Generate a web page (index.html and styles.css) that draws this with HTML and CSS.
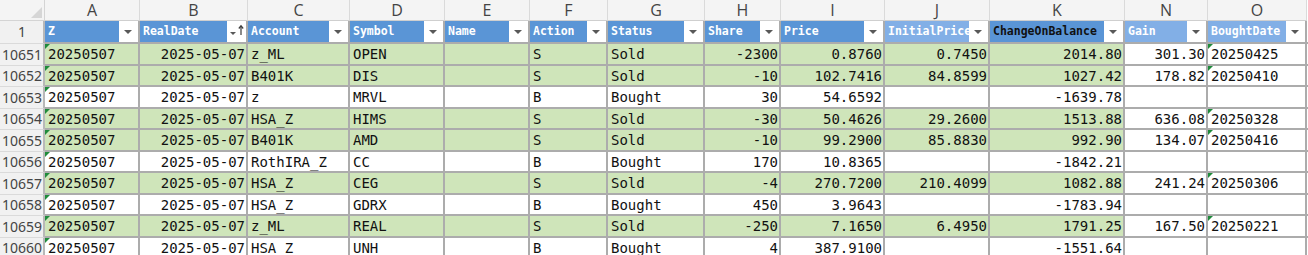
FILE: index.html
```html
<!DOCTYPE html>
<html>
<head>
<meta charset="utf-8">
<link rel="stylesheet" href="styles.css">
</head>
<body>
<div class="sheet">
  <div class="row letters">
    <div class="corner"><svg width="44" height="20"><path d="M42 7V18H31Z" fill="#d6d6d6"/></svg></div>
    <div class="L">A</div><div class="L">B</div><div class="L">C</div><div class="L">D</div><div class="L">E</div><div class="L">F</div><div class="L">G</div><div class="L">H</div><div class="L">I</div><div class="L">J</div><div class="L">K</div><div class="L">N</div><div class="L">O</div><div class="L fill"></div>
  </div>
  <div class="row head">
    <div class="n">1</div>
    <div class="c h">Z<span class="fb"><svg width="19" height="20"><path d="M5 8h8l-4 4z" fill="#595959"/></svg></span></div>
    <div class="c h">RealDate<span class="fb"><svg width="19" height="20"><path d="M3 10h6l-3 3z" fill="#595959"/><path d="M14 4v9" stroke="#3c3c3c" stroke-width="1.2" fill="none"/><path d="M11.8 6.5L14 3.8l2.2 2.7" stroke="#3c3c3c" stroke-width="1.2" fill="none"/></svg></span></div>
    <div class="c h">Account<span class="fb"><svg width="19" height="20"><path d="M5 8h8l-4 4z" fill="#595959"/></svg></span></div>
    <div class="c h">Symbol<span class="fb"><svg width="19" height="20"><path d="M5 8h8l-4 4z" fill="#595959"/></svg></span></div>
    <div class="c h">Name<span class="fb"><svg width="19" height="20"><path d="M5 8h8l-4 4z" fill="#595959"/></svg></span></div>
    <div class="c h">Action<span class="fb"><svg width="19" height="20"><path d="M5 8h8l-4 4z" fill="#595959"/></svg></span></div>
    <div class="c h">Status<span class="fb"><svg width="19" height="20"><path d="M5 8h8l-4 4z" fill="#595959"/></svg></span></div>
    <div class="c h">Share<span class="fb"><svg width="19" height="20"><path d="M5 8h8l-4 4z" fill="#595959"/></svg></span></div>
    <div class="c h">Price<span class="fb"><svg width="19" height="20"><path d="M5 8h8l-4 4z" fill="#595959"/></svg></span></div>
    <div class="c h hl">InitialPrice<span class="fb"><svg width="19" height="20"><path d="M5 8h8l-4 4z" fill="#595959"/></svg></span></div>
    <div class="c h hk">ChangeOnBalance<span class="fb"><svg width="19" height="20"><path d="M5 8h8l-4 4z" fill="#595959"/></svg></span></div>
    <div class="c h hl">Gain<span class="fb"><svg width="19" height="20"><path d="M5 8h8l-4 4z" fill="#595959"/></svg></span></div>
    <div class="c h hl">BoughtDate<span class="fb"><svg width="19" height="20"><path d="M5 8h8l-4 4z" fill="#595959"/></svg></span></div>
    <div class="c fill"></div>
  </div>

  <div class="row d">
    <div class="n">10651</div>
    <div class="c g t">20250507</div><div class="c g r">2025-05-07</div><div class="c g">z_ML</div><div class="c g">OPEN</div><div class="c g"></div><div class="c g">S</div><div class="c g">Sold</div><div class="c g r">-2300</div><div class="c g r">0.8760</div><div class="c g r">0.7450</div><div class="c g r">2014.80</div><div class="c r">301.30</div><div class="c t">20250425</div><div class="c fill"></div>
  </div>
  <div class="row d">
    <div class="n">10652</div>
    <div class="c g t">20250507</div><div class="c g r">2025-05-07</div><div class="c g">B401K</div><div class="c g">DIS</div><div class="c g"></div><div class="c g">S</div><div class="c g">Sold</div><div class="c g r">-10</div><div class="c g r">102.7416</div><div class="c g r">84.8599</div><div class="c g r">1027.42</div><div class="c r">178.82</div><div class="c t">20250410</div><div class="c fill"></div>
  </div>
  <div class="row d">
    <div class="n">10653</div>
    <div class="c t">20250507</div><div class="c r">2025-05-07</div><div class="c">z</div><div class="c">MRVL</div><div class="c"></div><div class="c">B</div><div class="c">Bought</div><div class="c r">30</div><div class="c r">54.6592</div><div class="c r"></div><div class="c r">-1639.78</div><div class="c r"></div><div class="c"></div><div class="c fill"></div>
  </div>
  <div class="row d">
    <div class="n">10654</div>
    <div class="c g t">20250507</div><div class="c g r">2025-05-07</div><div class="c g">HSA_Z</div><div class="c g">HIMS</div><div class="c g"></div><div class="c g">S</div><div class="c g">Sold</div><div class="c g r">-30</div><div class="c g r">50.4626</div><div class="c g r">29.2600</div><div class="c g r">1513.88</div><div class="c r">636.08</div><div class="c t">20250328</div><div class="c fill"></div>
  </div>
  <div class="row d">
    <div class="n">10655</div>
    <div class="c g t">20250507</div><div class="c g r">2025-05-07</div><div class="c g">B401K</div><div class="c g">AMD</div><div class="c g"></div><div class="c g">S</div><div class="c g">Sold</div><div class="c g r">-10</div><div class="c g r">99.2900</div><div class="c g r">85.8830</div><div class="c g r">992.90</div><div class="c r">134.07</div><div class="c t">20250416</div><div class="c fill"></div>
  </div>
  <div class="row d">
    <div class="n">10656</div>
    <div class="c t">20250507</div><div class="c r">2025-05-07</div><div class="c">RothIRA_Z</div><div class="c">CC</div><div class="c"></div><div class="c">B</div><div class="c">Bought</div><div class="c r">170</div><div class="c r">10.8365</div><div class="c r"></div><div class="c r">-1842.21</div><div class="c r"></div><div class="c"></div><div class="c fill"></div>
  </div>
  <div class="row d">
    <div class="n">10657</div>
    <div class="c g t">20250507</div><div class="c g r">2025-05-07</div><div class="c g">HSA_Z</div><div class="c g">CEG</div><div class="c g"></div><div class="c g">S</div><div class="c g">Sold</div><div class="c g r">-4</div><div class="c g r">270.7200</div><div class="c g r">210.4099</div><div class="c g r">1082.88</div><div class="c r">241.24</div><div class="c t">20250306</div><div class="c fill"></div>
  </div>
  <div class="row d">
    <div class="n">10658</div>
    <div class="c t">20250507</div><div class="c r">2025-05-07</div><div class="c">HSA_Z</div><div class="c">GDRX</div><div class="c"></div><div class="c">B</div><div class="c">Bought</div><div class="c r">450</div><div class="c r">3.9643</div><div class="c r"></div><div class="c r">-1783.94</div><div class="c r"></div><div class="c"></div><div class="c fill"></div>
  </div>
  <div class="row d">
    <div class="n">10659</div>
    <div class="c g t">20250507</div><div class="c g r">2025-05-07</div><div class="c g">z_ML</div><div class="c g">REAL</div><div class="c g"></div><div class="c g">S</div><div class="c g">Sold</div><div class="c g r">-250</div><div class="c g r">7.1650</div><div class="c g r">6.4950</div><div class="c g r">1791.25</div><div class="c r">167.50</div><div class="c t">20250221</div><div class="c fill"></div>
  </div>
  <div class="row d">
    <div class="n">10660</div>
    <div class="c t">20250507</div><div class="c r">2025-05-07</div><div class="c">HSA_Z</div><div class="c">UNH</div><div class="c"></div><div class="c">B</div><div class="c">Bought</div><div class="c r">4</div><div class="c r">387.9100</div><div class="c r"></div><div class="c r">-1551.64</div><div class="c r"></div><div class="c"></div><div class="c fill"></div>
  </div>
</div>
</body>
</html>
```

FILE: styles.css
```css
html, body {
  margin: 0;
  padding: 0;
  background: #ffffff;
}

.sheet {
  width: 1308px;
  height: 255px;
  overflow: hidden;
  font-family: "DejaVu Sans Mono", "Liberation Mono", monospace;
  color: #111;
}

.row {
  display: grid;
  grid-template-columns: 45px 95px 108px 102px 95px 85px 78px 97px 76px 104px 105px 135px 83px 99px 1fr;
}

.letters {
  height: 21px;
  background: #f4f4f4;
}

.corner {
  background: #f4f4f4;
  border-right: 1px solid #d4d4d4;
  border-bottom: 1px solid #d4d4d4;
  box-sizing: border-box;
  overflow: hidden;
}

.corner svg {
  display: block;
}

.L {
  box-sizing: border-box;
  border-right: 1px solid #dadada;
  border-bottom: 1px solid #cfcfcf;
  font-family: "Open Sans", "Noto Sans", sans-serif;
  font-size: 16px;
  color: #444;
  display: flex;
  align-items: center;
  justify-content: center;
  line-height: 1;
}

.head {
  height: 23px;
}

.d {
  height: 21px;
}

.d:nth-child(odd) {
  height: 22px;
}

.n {
  box-sizing: border-box;
  background: #f1f1f1;
  border-right: 2px solid #b8b8b8;
  border-bottom: 1px solid #dadada;
  font-family: "Noto Sans", "Open Sans", sans-serif;
  font-size: 14px;
  color: #444;
  display: flex;
  align-items: center;
  justify-content: center;
  line-height: 1;
  padding-left: 1px;
}

.c {
  position: relative;
  box-sizing: border-box;
  border-right: 2px solid #acacac;
  border-bottom: 2px solid #acacac;
  padding: 0 2px 0 3px;
  font-size: 14px;
  line-height: 1;
  white-space: nowrap;
  overflow: hidden;
  display: flex;
  align-items: center;
  background: #ffffff;
}

.r {
  justify-content: flex-end;
  padding-right: 1px;
}

.g {
  background: #cfe5ba;
}

.t::before {
  content: "";
  position: absolute;
  left: 0;
  top: 0;
  border-top: 5px solid #1f8b3b;
  border-right: 5px solid transparent;
}

.h {
  background: #5a95d6;
  color: #ffffff;
  font-size: 11.5px;
  font-weight: bold;
  padding-left: 3px;
}

.hl {
  background: #82afe6;
}

.hk {
  color: #111;
}

.fb {
  position: absolute;
  right: 0;
  top: 0;
  width: 19px;
  height: 21px;
  background: #ffffff;
}

.fb svg {
  display: block;
  margin-top: 1px;
}

.fill {
  background: #ffffff;
  border-right: none;
}

.letters .fill {
  background: #ffffff;
  border-bottom: none;
}
```
